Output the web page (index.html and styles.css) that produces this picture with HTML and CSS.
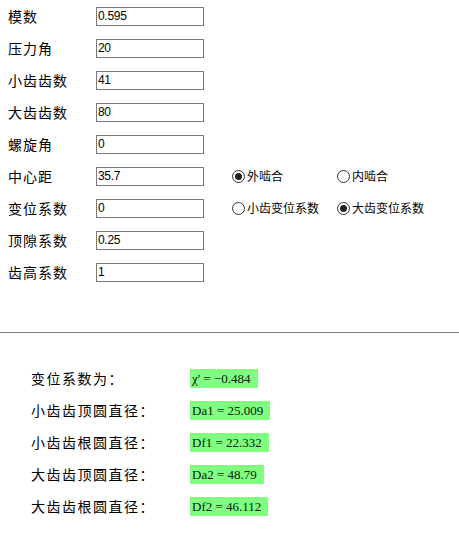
FILE: index.html
```html
<!DOCTYPE html>
<html>
<head>
<meta charset="utf-8">
<link rel="stylesheet" href="styles.css">
</head>
<body>
<div class="form">
  <div class="row"><span class="lbl">模数</span><input class="inp" value="0.595"></div>
  <div class="row"><span class="lbl">压力角</span><input class="inp" value="20"></div>
  <div class="row"><span class="lbl">小齿齿数</span><input class="inp" value="41"></div>
  <div class="row"><span class="lbl">大齿齿数</span><input class="inp" value="80"></div>
  <div class="row"><span class="lbl">螺旋角</span><input class="inp" value="0"></div>
  <div class="row"><span class="lbl">中心距</span><input class="inp" value="35.7">
    <label class="opt first"><span class="radio on"></span>外啮合</label>
    <label class="opt"><span class="radio"></span>内啮合</label>
  </div>
  <div class="row"><span class="lbl">变位系数</span><input class="inp" value="0">
    <label class="opt first"><span class="radio"></span>小齿变位系数</label>
    <label class="opt"><span class="radio on"></span>大齿变位系数</label>
  </div>
  <div class="row"><span class="lbl">顶隙系数</span><input class="inp" value="0.25"></div>
  <div class="row"><span class="lbl">齿高系数</span><input class="inp" value="1"></div>
</div>
<div class="rule"></div>
<div class="results">
  <div class="rrow"><span class="rlbl">变位系数为：</span><span class="val">χ' = −0.484</span></div>
  <div class="rrow"><span class="rlbl">小齿齿顶圆直径：</span><span class="val">Da1 = 25.009</span></div>
  <div class="rrow"><span class="rlbl">小齿齿根圆直径：</span><span class="val">Df1 = 22.332</span></div>
  <div class="rrow"><span class="rlbl">大齿齿顶圆直径：</span><span class="val">Da2 = 48.79</span></div>
  <div class="rrow"><span class="rlbl">大齿齿根圆直径：</span><span class="val">Df2 = 46.112</span></div>
</div>
</body>
</html>
```
FILE: styles.css
```css
html, body {
  margin: 0;
  padding: 0;
  background: #fff;
}
body {
  font-family: "Noto Sans CJK SC", "DejaVu Sans", sans-serif;
  color: #000;
}
.form {
  padding-left: 8px;
}
.row {
  display: flex;
  align-items: center;
  height: 32px;
}
.lbl {
  width: 88px;
  font-size: 14px;
  letter-spacing: 1px;
  line-height: 16px;
}
.inp {
  box-sizing: border-box;
  width: 108px;
  height: 19px;
  margin: 0;
  padding: 0 1px;
  border: 1px solid #7a7a7a;
  font-family: "Liberation Sans", "Arial", sans-serif;
  font-size: 12px;
  letter-spacing: -0.3px;
  color: #000;
  background: #fff;
  outline: none;
}
.opt {
  display: flex;
  align-items: center;
  font-size: 12px;
  line-height: 14px;
  width: 105px;
}
.opt.first {
  margin-left: 28px;
}
.radio {
  box-sizing: border-box;
  width: 13px;
  height: 13px;
  border: 1px solid #333;
  border-radius: 50%;
  margin-right: 2px;
  display: flex;
  align-items: center;
  justify-content: center;
  background: #fff;
}
.radio.on::after {
  content: "";
  width: 7px;
  height: 7px;
  border-radius: 50%;
  background: #222;
}
.rule {
  margin-top: 44px;
  height: 1px;
  background: #808080;
}
.results {
  padding-top: 29px;
  padding-left: 31px;
}
.rrow {
  display: flex;
  align-items: center;
  height: 32px;
}
.rlbl {
  width: 159px;
  font-size: 14px;
  letter-spacing: 1.5px;
  line-height: 16px;
}
.val {
  background: #80ff80;
  font-family: "Liberation Serif", serif;
  font-size: 13px;
  line-height: 19px;
  height: 19px;
  padding: 0 7px 0 2px;
  color: #0a140a;
}
```
